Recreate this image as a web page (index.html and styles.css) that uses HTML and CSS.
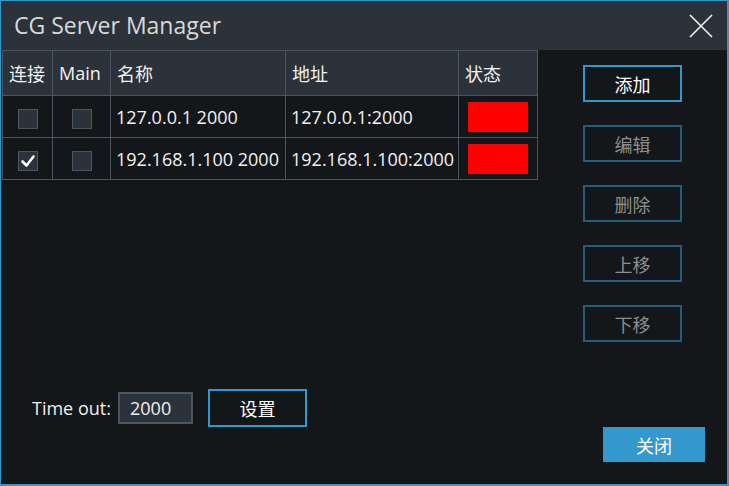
FILE: index.html
```html
<!DOCTYPE html>
<html>
<head>
<meta charset="utf-8">
<link rel="stylesheet" href="styles.css">
</head>
<body>
<div class="window">
  <div class="titlebar">
    <span class="title">CG Server Manager</span>
    <span class="close">
      <svg width="24" height="24" viewBox="0 0 24 24"><path d="M1 1 L23 23 M23 1 L1 23" stroke="#f2f2f2" stroke-width="1.6" fill="none"/></svg>
    </span>
  </div>
  <div class="content">
    <div class="top">
      <table class="grid">
        <colgroup>
          <col class="c1"><col class="c2"><col class="c3"><col class="c4"><col class="c5">
        </colgroup>
        <thead>
          <tr><th>连接</th><th>Main</th><th>名称</th><th>地址</th><th>状态</th></tr>
        </thead>
        <tbody>
          <tr>
            <td class="cb"><span class="box"></span></td>
            <td class="cb"><span class="box"></span></td>
            <td>127.0.0.1 2000</td>
            <td>127.0.0.1:2000</td>
            <td class="st"><span class="red"></span></td>
          </tr>
          <tr>
            <td class="cb"><span class="box"><svg width="18" height="18" viewBox="0 0 18 18"><path d="M3.5 9.5 L7.5 13.5 L14.5 4.5" stroke="#ffffff" stroke-width="2.6" fill="none" stroke-linecap="round" stroke-linejoin="round"/></svg></span></td>
            <td class="cb"><span class="box"></span></td>
            <td>192.168.1.100 2000</td>
            <td>192.168.1.100:2000</td>
            <td class="st"><span class="red"></span></td>
          </tr>
        </tbody>
      </table>
      <div class="actions">
        <button class="btn active">添加</button>
        <button class="btn dim">编辑</button>
        <button class="btn dim">删除</button>
        <button class="btn dim">上移</button>
        <button class="btn dim">下移</button>
      </div>
    </div>
    <div class="timeout">
      <span class="label">Time out:</span>
      <span class="input">2000</span>
      <button class="btn active set">设置</button>
    </div>
    <div class="bottom">
      <button class="btn primary">关闭</button>
    </div>
  </div>
</div>
</body>
</html>
```

FILE: styles.css
```css
html, body {
  margin: 0;
  padding: 0;
  background: #3a8fbf;
}
body {
  width: 729px;
  height: 486px;
  overflow: hidden;
  font-family: "Open Sans", "Noto Sans CJK SC", sans-serif;
  color: #f0f0f0;
}
.window {
  width: 728px;
  height: 485px;
  box-sizing: border-box;
  border: 1px solid #3399cc;
  background: #14171a;
  display: flex;
  flex-direction: column;
}
.titlebar {
  height: 49px;
  flex: none;
  background: #2b323a;
  display: flex;
  align-items: center;
  justify-content: space-between;
  padding: 0 14px 0 13px;
}
.title {
  font-size: 23px;
  color: #d9d9d9;
  margin-top: -1px;
}
.close {
  display: flex;
  width: 24px;
  height: 24px;
  margin-top: 1px;
}
.content {
  flex: 1;
  display: flex;
  flex-direction: column;
}
.top {
  display: flex;
  align-items: flex-start;
}
.grid {
  margin-left: 1px;
  border-collapse: collapse;
  table-layout: fixed;
  width: 536px;
  font-size: 18px;
  font-family: "Open Sans", "Noto Sans CJK SC", sans-serif;
}
.c1 { width: 50px; }
.c2 { width: 58px; }
.c3 { width: 175px; }
.c4 { width: 173px; }
.c5 { width: 79px; }
.grid th, .grid td {
  border: 1px solid #4a5560;
  padding: 0 0 0 5px;
  text-align: left;
  white-space: nowrap;
  overflow: hidden;
  color: #f2f2f2;
  font-weight: normal;
}
.grid th {
  height: 44px;
  background: #2b323a;
  padding-left: 6px;
}
.grid td {
  height: 41px;
  background: #14171a;
}
.grid td.cb, .grid td.st {
  padding: 0;
  text-align: center;
}
.box {
  display: inline-flex;
  align-items: center;
  justify-content: center;
  width: 20px;
  height: 20px;
  box-sizing: border-box;
  border: 1px solid #4a5560;
  background: #2b323a;
  vertical-align: middle;
}
.red {
  display: inline-block;
  width: 60px;
  height: 30px;
  background: #ff0000;
  vertical-align: middle;
}
.actions {
  margin-left: 45px;
  padding-top: 15px;
  display: flex;
  flex-direction: column;
  gap: 23px;
}
.btn {
  flex: none;
  width: 99px;
  height: 37px;
  box-sizing: border-box;
  background: transparent;
  font-family: "Noto Sans CJK SC", sans-serif;
  font-size: 18px;
  padding: 0;
  margin: 0;
  display: flex;
  align-items: center;
  justify-content: center;
}
.btn.active {
  border: 2px solid #3399cc;
  color: #ffffff;
}
.btn.dim {
  border: 2px solid #235d7a;
  color: #8e8e8e;
}
.timeout {
  margin-top: 47px;
  height: 38px;
  display: flex;
  align-items: center;
  padding-left: 31px;
}
.label {
  flex: none;
  width: 81px;
  font-size: 18px;
  color: #f0f0f0;
}
.input {
  flex: none;
  margin-left: 5px;
  width: 75px;
  height: 32px;
  box-sizing: border-box;
  border: 2px solid #4a5560;
  background: #2b323a;
  font-size: 18px;
  padding-left: 10px;
  display: flex;
  align-items: center;
  color: #f0f0f0;
}
.btn.set {
  margin-left: 15px;
  height: 38px;
}
.bottom {
  display: flex;
  justify-content: flex-end;
  padding-right: 22px;
}
.btn.primary {
  width: 102px;
  height: 35px;
  background: #3399cc;
  border: none;
  color: #ffffff;
}
```
